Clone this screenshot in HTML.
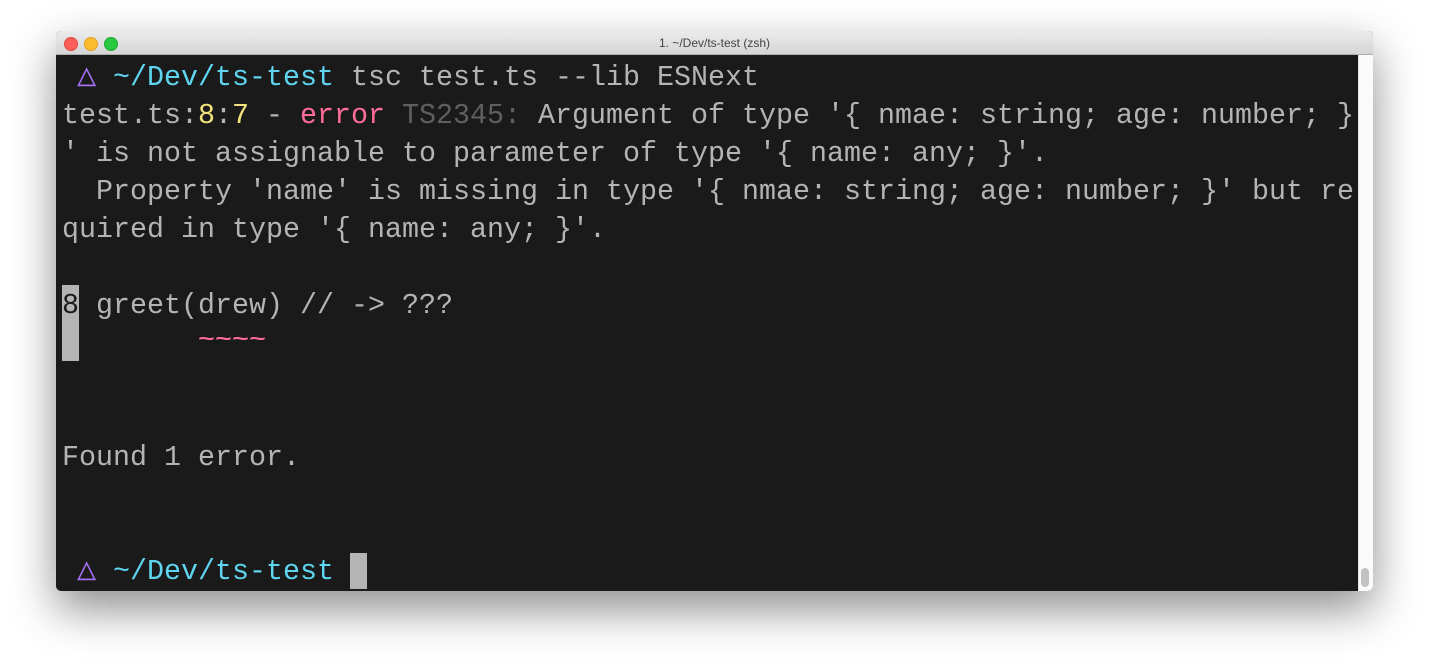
<!DOCTYPE html>
<html><head><meta charset="utf-8"><style>
html,body{margin:0;padding:0;background:#fff;width:1429px;height:671px;overflow:hidden}
.win{position:absolute;left:56px;top:31px;width:1317px;height:560px;border-radius:5px;box-shadow:0 18px 45px rgba(0,0,0,.45);overflow:hidden;background:#1a1a1a}
.tb{position:absolute;left:0;top:0;width:100%;height:23px;background:linear-gradient(#ebebeb,#d5d5d5);border-bottom:1px solid #b0b0b0;font:12px "Liberation Sans",sans-serif;color:#444;text-align:center;line-height:24px}
.dot{position:absolute;top:6px;width:12px;height:12px;border-radius:50%}
.sb{position:absolute;left:1302px;top:24px;width:15px;height:536px;background:#fafafa;border-left:1px solid #e4e4e4}
.th{position:absolute;left:1305px;top:537px;width:8px;height:19px;border-radius:4px;background:#c2c2c2}
.term{position:absolute;left:6px;top:28px;font-family:"Liberation Mono",monospace;font-size:28.33px;color:#b4b4b4;white-space:pre}
.l{position:absolute;left:0;height:38px;line-height:38px}
.c{color:#5fd5f0}.y{color:#f2e37b}.p{color:#ff6d98}.g{color:#5f5f5f}.v{color:#a070f0;font-size:32px}
</style></head><body>
<div class="win">
<div class="tb">1. ~/Dev/ts-test (zsh)
<div class="dot" style="left:8px;background:#fc5f57;border:0.5px solid #de4a42"></div>
<div class="dot" style="left:28px;background:#fdbc2e;border:0.5px solid #dfa023"></div>
<div class="dot" style="left:48px;background:#28c840;border:0.5px solid #1ea932"></div>
</div>
<div class="term">
<div class="l" style="top:0"> <span class="v" style="position:absolute;left:15px;top:-1px">△</span>  <span class="c">~/Dev/ts-test</span> tsc test.ts --lib ESNext</div>
<div class="l" style="top:38px">test.ts:<span class="y">8</span>:<span class="y">7</span> - <span class="p">error</span> <span class="g">TS2345:</span> Argument of type '{ nmae: string; age: number; }</div>
<div class="l" style="top:76px">' is not assignable to parameter of type '{ name: any; }'.</div>
<div class="l" style="top:114px">  Property 'name' is missing in type '{ nmae: string; age: number; }' but re</div>
<div class="l" style="top:152px">quired in type '{ name: any; }'.</div>
<div style="position:absolute;left:0;top:226px;width:17px;height:76px;background:#b4b4b4"></div>
<div class="l" style="top:228px"><span style="color:#1a1a1a">8</span> greet(drew) // -&gt; ???</div>
<div class="l" style="top:262px;left:136px;font-weight:bold;font-size:28.33px;transform:scaleY(0.7)"><span class="p">~~~~</span></div>
<div class="l" style="top:380px">Found 1 error.</div>
<div class="l" style="top:494px"> <span class="v" style="position:absolute;left:15px;top:-1px">△</span>  <span class="c">~/Dev/ts-test</span> </div>
<div style="position:absolute;left:288px;top:494px;width:17px;height:36px;background:#b4b4b4"></div>
</div>
<div class="sb"></div><div class="th"></div>
</div>
</body></html>
